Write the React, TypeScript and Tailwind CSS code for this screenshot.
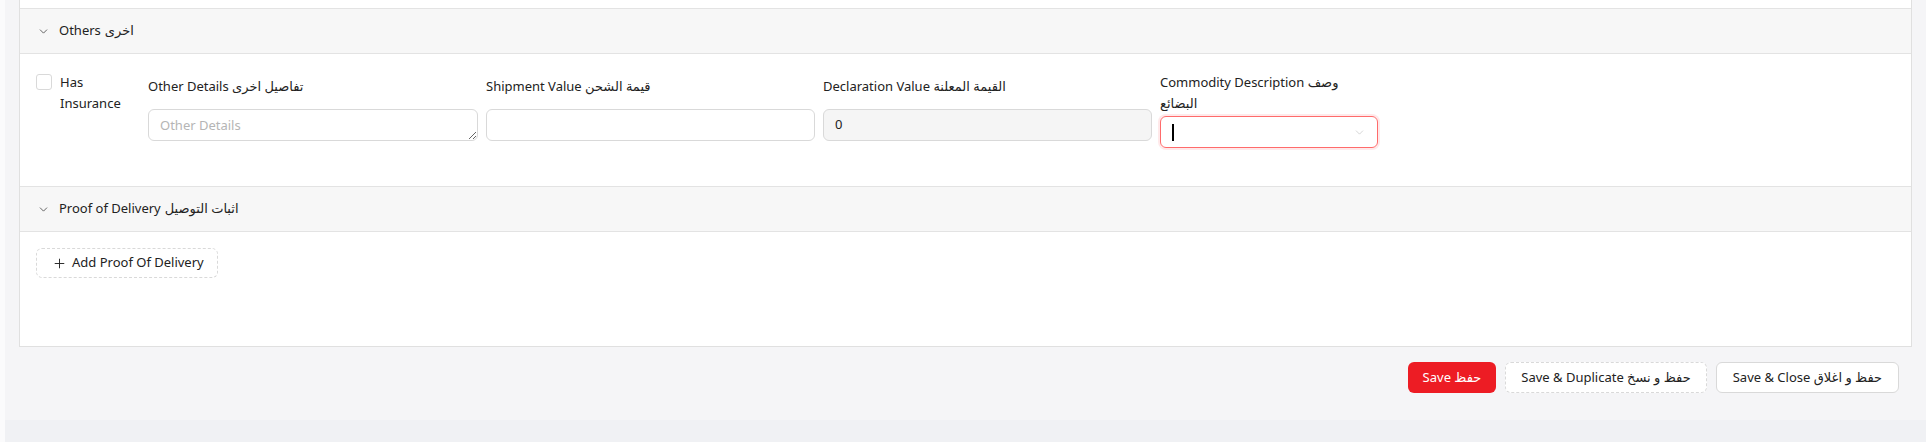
import { ChevronDown, Plus } from "lucide-react";

const FONT = { fontFamily: '"Noto Sans", "DejaVu Sans", sans-serif' };

function SectionHeader({ en, ar }: { en: string; ar: string }) {
  return (
    <div className="flex h-[46px] items-center gap-[9px] border-y border-[#e3e3e3] bg-[#f7f7f7] pl-[17px] text-[13px] text-[#222]">
      <ChevronDown size={13} strokeWidth={1.5} className="text-[#444]" />
      <span className="flex gap-[4px]" dir="ltr">
        <span>{en}</span>
        <span dir="rtl">{ar}</span>
      </span>
    </div>
  );
}

function FieldLabel({ children }: { children: React.ReactNode }) {
  return <label className="block text-[13px] leading-[21px] text-[#222]">{children}</label>;
}

export default function App() {
  return (
    <div className="flex h-[442px] w-full text-[#222]" style={FONT}>
      <div className="w-[5px] shrink-0 bg-[#fbfbfc]" />
      <div className="flex flex-1 flex-col bg-[#f5f5f7]">
        <div className="mx-[14px] border-x border-b border-[#e0e0e0] bg-white">
          <div className="h-[8px]" />

          {/* Others */}
          <SectionHeader en="Others" ar="اخرى" />
          <div className="flex h-[132px] items-start gap-2 pl-[16px] pt-[18px]">
            <label className="flex w-[104px] items-start gap-[8px] pt-[2px]">
              <span className="block h-[16px] w-[16px] shrink-0 rounded-[3px] border border-[#d9d9d9] bg-white" />
              <span className="-mt-[2px] text-[13px] leading-[21px] text-[#222]">
                Has
                <br />
                Insurance
              </span>
            </label>

            <div className="w-[330px] pt-[4px]">
              <FieldLabel>Other Details تفاصيل اخرى</FieldLabel>
              <textarea
                rows={1}
                placeholder="Other Details"
                className="mt-[12px] block h-[32px] w-full rounded-[6px] border border-[#d9d9d9] px-[11px] py-[5px] text-[13px] leading-[20px] placeholder:text-[#b5b5b5] focus:outline-none"
              />
            </div>

            <div className="w-[329px] pt-[4px]">
              <FieldLabel>Shipment Value قيمة الشحن</FieldLabel>
              <input className="mt-[12px] block h-[32px] w-full rounded-[6px] border border-[#d9d9d9] px-[11px] text-[13px] focus:outline-none" />
            </div>

            <div className="w-[329px] pt-[4px]">
              <FieldLabel>Declaration Value القيمة المعلنة</FieldLabel>
              <div className="mt-[12px] flex h-[32px] w-full items-center rounded-[6px] border border-[#d9d9d9] bg-[#f5f5f5] px-[11px] text-[13px] text-[#222]">
                0
              </div>
            </div>

            <div className="w-[218px]">
              <FieldLabel>Commodity Description وصف البضائع</FieldLabel>
              <div className="mt-[2px] flex h-[32px] w-full items-center justify-between rounded-[6px] border border-[#ff6b6b] px-[11px] shadow-[0_0_0_2px_rgba(255,77,79,0.12)]">
                <span className="block h-[17px] w-[2px] bg-black" />
                <ChevronDown size={13} strokeWidth={1.3} className="text-[#c4c4c4]" />
              </div>
            </div>
          </div>

          {/* Proof of Delivery */}
          <SectionHeader en="Proof of Delivery" ar="اثبات التوصيل" />
          <div className="h-[114px] pl-[16px] pt-[16px]">
            <button className="flex h-[30px] items-center gap-[5px] rounded-[6px] border border-dashed border-[#d9d9d9] bg-white pl-[15px] pr-[13px] text-[13px] text-[#222]">
              <Plus size={15} strokeWidth={1.5} />
              Add Proof Of Delivery
            </button>
          </div>
        </div>

        {/* Form actions */}
        <div className="mr-[27px] mt-[15px] flex justify-end gap-[9px]">
          <button className="h-[31px] rounded-[6px] bg-[#ed1c24] px-[15px] text-[13px] text-white">
            Save حفظ
          </button>
          <button className="h-[31px] rounded-[6px] border border-dashed border-[#d9d9d9] bg-white px-[15px] text-[13px] text-[#222]">
            Save &amp; Duplicate حفظ و نسخ
          </button>
          <button className="h-[31px] rounded-[6px] border border-[#d9d9d9] bg-white px-[16px] text-[13px] text-[#222]">
            Save &amp; Close حفظ و اغلاق
          </button>
        </div>

        <div className="mt-auto h-[22px] bg-[#f0f1f4]" />
      </div>
    </div>
  );
}
